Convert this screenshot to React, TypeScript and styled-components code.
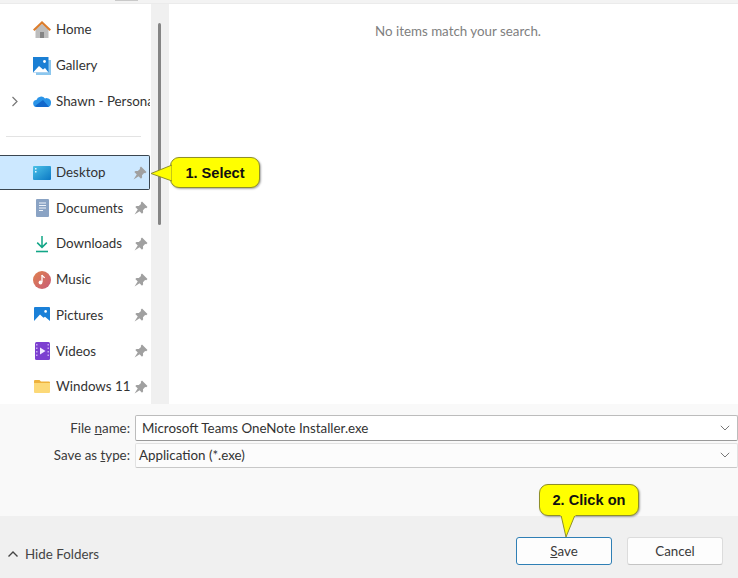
import React from "react";
import styled, { createGlobalStyle } from "styled-components";

const Global = createGlobalStyle`
  html, body { margin: 0; padding: 0; background: #fff; }
  #root { width: 738px; height: 578px; overflow: hidden; }
  * { box-sizing: border-box; }
`;

const Dialog = styled.div`
  position: relative;
  width: 738px;
  height: 578px;
  display: flex;
  flex-direction: column;
  overflow: hidden;
  background: #fff;
  font-family: Lato, Roboto, sans-serif;
  font-size: 13.35px;
  color: #333;
`;

const TopStrip = styled.div`
  height: 4px;
  flex: none;
  background: #f3f3f3;
  border-bottom: 1px solid #ebebeb;
  padding-left: 115px;
`;

const TopTick = styled.div`
  width: 23px;
  height: 1px;
  background: #c9c9c9;
`;

const Main = styled.div`
  height: 400px;
  flex: none;
  display: flex;
`;

const Sidebar = styled.nav`
  width: 151px;
  flex: none;
  padding-top: 8px;
  overflow: hidden;
`;

const Row = styled.div<{ $selected?: boolean }>`
  width: 150px;
  height: 35.7px;
  display: flex;
  align-items: center;
  position: relative;
  padding-left: 33px;
  white-space: nowrap;
  background: ${(p) => (p.$selected ? "#cce8ff" : "transparent")};
  ${(p) =>
    p.$selected
      ? "border: 1px solid #3a4650; border-left: none; border-radius: 0 2px 2px 0;"
      : ""}
`;

const Chevron = styled.svg`
  position: absolute;
  left: 11px;
  top: 13px;
  width: 8px;
  height: 11px;
`;

const IconBox = styled.span`
  width: 18px;
  height: 18px;
  flex: none;
  display: flex;
  align-items: center;
  justify-content: center;
  margin-right: 5px;
`;

const Label = styled.span`
  flex: 1;
  min-width: 0;
  overflow: hidden;
  padding-bottom: 1px;
`;

const Pin = styled.svg`
  flex: none;
  width: 14px;
  height: 14px;
  margin-right: 2px;
`;

const DividerRow = styled.div`
  height: 35.7px;
  display: flex;
  align-items: center;
  padding: 0 10px 0 6px;
`;

const Divider = styled.div`
  width: 100%;
  height: 1px;
  background: #e3e3e3;
`;

const Track = styled.div`
  width: 18px;
  flex: none;
  background: #f0f0f0;
  padding: 19px 0 0 7px;
`;

const Thumb = styled.div`
  width: 3px;
  height: 202px;
  border-radius: 2px;
  background: #858585;
`;

const Content = styled.main`
  flex: 1;
  display: flex;
  justify-content: center;
  padding: 19px 0 0 9px;
  color: #808080;
`;

const FormPanel = styled.section`
  height: 112px;
  flex: none;
  background: #f9f9f9;
  padding-top: 11px;
  display: flex;
  flex-direction: column;
  gap: 2px;
`;

const FormRow = styled.div`
  display: flex;
  align-items: center;
`;

const FormLabel = styled.label`
  width: 130px;
  flex: none;
  text-align: right;
  margin-right: 5px;
  padding-bottom: 1px;
  color: #3a3a3a;
`;

const Field = styled.div<{ $focus?: boolean }>`
  flex: 1;
  height: ${(p) => (p.$focus ? "26px" : "25px")};
  display: flex;
  align-items: center;
  justify-content: space-between;
  padding: 0 7px 1px ${(p) => (p.$focus ? "6px" : "3px")};
  background: ${(p) => (p.$focus ? "#fff" : "#fcfcfc")};
  border: 1px solid ${(p) => (p.$focus ? "#bcbcbc" : "#e2e2e2")};
  border-bottom-color: ${(p) => (p.$focus ? "#9a9a9a" : "#c8c8c8")};
  border-radius: 2px;
  color: #333;
`;

const Caret = styled.svg`
  width: 10px;
  height: 6px;
  flex: none;
`;

const Footer = styled.footer`
  flex: 1;
  background: #f0f0f0;
  display: flex;
  align-items: center;
  justify-content: space-between;
  padding: 8px 15px 0 7px;
`;

const HideFolders = styled.div`
  display: flex;
  align-items: center;
  gap: 6px;
  margin-top: 5px;
  color: #444;
`;

const Buttons = styled.div`
  display: flex;
  gap: 15px;
`;

const Button = styled.button<{ $primary?: boolean }>`
  width: 96px;
  height: 28px;
  padding: 0 0 1px;
  font: inherit;
  color: #3a3a3a;
  background: #fdfdfd;
  border-radius: 3px;
  border: 1px solid ${(p) => (p.$primary ? "#2f7fb5" : "#dcdcdc")};
  ${(p) => (p.$primary ? "" : "border-bottom-color: #c4c4c4;")}
`;

const Callout = styled.div<{ $left: number; $top: number; $width: number; $height: number }>`
  position: absolute;
  left: ${(p) => p.$left}px;
  top: ${(p) => p.$top}px;
  width: ${(p) => p.$width}px;
  height: ${(p) => p.$height}px;
  display: flex;
  align-items: center;
  justify-content: center;
  background: #ffff00;
  border: 1px solid #8f8f2a;
  border-radius: 9px;
  box-shadow: 1px 1px 2px rgba(0, 0, 0, 0.35);
  font-family: "Liberation Sans", Arial, sans-serif;
  font-weight: 700;
  font-size: 14.6px;
  color: #111;
`;

const Tail = styled.svg`
  position: absolute;
  overflow: visible;
`;

const LeftTail = styled(Tail)`
  left: -20px;
  top: 5px;
  width: 22px;
  height: 20px;
`;

const DownTail = styled(Tail)`
  left: 18px;
  top: 30px;
  width: 20px;
  height: 22px;
`;

const Home = () => (
  <svg width="18" height="18" viewBox="0 0 18 18">
    <path d="M2.500 8.500 9 3l6.500 5.500V17h-13z" fill="#bdbdbd" />
    <path d="M7 11h4v6H7z" fill="#858585" />
    <path d="M.7 9.300 9 1.500l8.300 7.800" fill="none" stroke="#dc7d2c" strokeWidth="2.200" />
  </svg>
);

const Gallery = () => (
  <svg width="18" height="18" viewBox="0 0 18 18">
    <path d="M3 3h15v15H3z" fill="#8cc7ee" />
    <path d="M0 0h15.500v15.500H0z" fill="#1a7fd4" />
    <path d="M0 15.500 6 9l4 3.500 2-1.500 3.500 4.500z" fill="#fff" />
    <circle cx="11.500" cy="4.500" r="1.400" fill="#fff" />
  </svg>
);

const Cloud = () => (
  <svg width="18" height="12" viewBox="0 0 18 12">
    <path d="M4 12a3.500 3.500 0 0 1-.6-7A5 5 0 0 1 12 3.400 4.400 4.400 0 0 1 18 8a4 4 0 0 1-3.800 4z" fill="#2a94e8" />
    <path d="M2 11 10 5l6 7H4z" fill="#1268cc" />
  </svg>
);

const DesktopIcon = () => (
  <svg width="18" height="14" viewBox="0 0 18 14">
    <defs>
      <linearGradient id="dg" x1="0" y1="0" x2="1" y2="1">
        <stop offset="0" stopColor="#4cc2e8" />
        <stop offset="1" stopColor="#0b78c4" />
      </linearGradient>
    </defs>
    <rect width="18" height="14" rx="1" fill="url(#dg)" />
    <path d="M2 2h1.500v1.500H2zM2 5h1.500v1.500H2z" fill="#e8f7ff" />
  </svg>
);

const Docs = () => (
  <svg width="13" height="18" viewBox="0 0 13 18">
    <rect width="13" height="18" rx="1" fill="#8aa3c4" />
    <path d="M3 4h7M3 6.500h7M3 9h7M3 11.500h4" stroke="#f0f4fa" strokeWidth="1" />
  </svg>
);

const Down = () => (
  <svg width="14" height="18" viewBox="0 0 14 18">
    <path d="M7 1v11M2.200 7.600 7 12.400l4.800-4.800" fill="none" stroke="#12a687" strokeWidth="1.500" />
    <path d="M1 16.500h12" stroke="#12a687" strokeWidth="1.600" />
  </svg>
);

const Music = () => (
  <svg width="18" height="18" viewBox="0 0 18 18">
    <defs>
      <linearGradient id="mg" x1="0" y1="0" x2="1" y2="1">
        <stop offset="0" stopColor="#e0814e" />
        <stop offset="1" stopColor="#c85c78" />
      </linearGradient>
    </defs>
    <circle cx="9" cy="9" r="9" fill="url(#mg)" />
    <path d="M9 4v7" stroke="#fff" strokeWidth="1.300" />
    <path d="M9 4c.4 1.600 2 1.800 2.600 3" fill="none" stroke="#fff" strokeWidth="1.200" />
    <circle cx="7.500" cy="11.500" r="1.900" fill="#fff" />
  </svg>
);

const Pictures = () => (
  <svg width="16" height="16" viewBox="0 0 16 16">
    <rect width="16" height="16" rx="1" fill="#1a80d8" />
    <path d="M0 16V14L6 7.500l3.500 3.200 1.500-1L16 14v2z" fill="#fff" />
    <circle cx="11.600" cy="4.400" r="1.300" fill="#fff" />
  </svg>
);

const Videos = () => (
  <svg width="15" height="18" viewBox="0 0 15 18">
    <rect width="15" height="18" rx="1.500" fill="#7c3fd0" />
    <path d="M5 5.500v7l5.500-3.500z" fill="#f2eaff" />
    <path d="M1.200 2h1.200v1.500H1.200zM1.200 5.500h1.200V7H1.200zM1.200 9h1.200v1.500H1.200zM1.200 12.500h1.200V14H1.200zM12.600 2h1.200v1.500h-1.200zM12.600 5.500h1.200V7h-1.200zM12.600 9h1.200v1.500h-1.200zM12.600 12.500h1.200V14h-1.200z" fill="#d9c6f7" />
  </svg>
);

const Folder = () => (
  <svg width="16" height="13" viewBox="0 0 16 13">
    <path d="M0 1a1 1 0 0 1 1-1h4.500L7 1.600h8a1 1 0 0 1 1 1V4H0z" fill="#eeb23c" />
    <path d="M0 3h16v9a1 1 0 0 1-1 1H1a1 1 0 0 1-1-1z" fill="#fcd978" />
  </svg>
);

const PinIcon = () => (
  <Pin viewBox="0 0 14 14">
    <path d="M8 .5 13.500 6l-1.300 1.200-1.100-.2L9 9.200l.1 2.300L8 12.700 1.300 6l1.200-1.100 2.300.1L7 2.900l-.2-1.100z" fill="#a0a0a0" />
    <path d="M4 8 .6 13.400 6 10z" fill="#a0a0a0" />
  </Pin>
);

type Item = { label: string; icon: React.ReactNode; pinned?: boolean; expand?: boolean; selected?: boolean };

const topItems: Item[] = [
  { label: "Home", icon: <Home /> },
  { label: "Gallery", icon: <Gallery /> },
  { label: "Shawn - Personal", icon: <Cloud />, expand: true },
];

const pinnedItems: Item[] = [
  { label: "Desktop", icon: <DesktopIcon />, pinned: true, selected: true },
  { label: "Documents", icon: <Docs />, pinned: true },
  { label: "Downloads", icon: <Down />, pinned: true },
  { label: "Music", icon: <Music />, pinned: true },
  { label: "Pictures", icon: <Pictures />, pinned: true },
  { label: "Videos", icon: <Videos />, pinned: true },
  { label: "Windows 11", icon: <Folder />, pinned: true },
];

const NavRow = ({ item }: { item: Item }) => (
  <Row $selected={item.selected}>
    {item.expand && (
      <Chevron viewBox="0 0 8 11">
        <path d="M1.500 1 6 5.500 1.500 10" fill="none" stroke="#777" strokeWidth="1.200" />
      </Chevron>
    )}
    <IconBox>{item.icon}</IconBox>
    <Label>{item.label}</Label>
    {item.pinned && <PinIcon />}
  </Row>
);

const CaretIcon = () => (
  <Caret viewBox="0 0 10 6">
    <path d="M.8.8 5 5l4.200-4.200" fill="none" stroke="#777" strokeWidth="1" />
  </Caret>
);

export default function App() {
  return (
    <Dialog>
      <Global />
      <TopStrip>
        <TopTick />
      </TopStrip>
      <Main>
        <Sidebar>
          {topItems.map((it) => (
            <NavRow key={it.label} item={it} />
          ))}
          <DividerRow>
            <Divider />
          </DividerRow>
          {pinnedItems.map((it) => (
            <NavRow key={it.label} item={it} />
          ))}
        </Sidebar>
        <Track>
          <Thumb />
        </Track>
        <Content>No items match your search.</Content>
      </Main>
      <FormPanel>
        <FormRow>
          <FormLabel>
            File <u>n</u>ame:
          </FormLabel>
          <Field $focus>
            <span>Microsoft Teams OneNote Installer.exe</span>
            <CaretIcon />
          </Field>
        </FormRow>
        <FormRow>
          <FormLabel>
            Save as <u>t</u>ype:
          </FormLabel>
          <Field>
            <span>Application (*.exe)</span>
            <CaretIcon />
          </Field>
        </FormRow>
      </FormPanel>
      <Footer>
        <HideFolders>
          <svg width="12" height="8" viewBox="0 0 12 8">
            <path d="M1.500 6.500 6 2l4.500 4.500" fill="none" stroke="#444" strokeWidth="1.400" />
          </svg>
          <span>Hide Folders</span>
        </HideFolders>
        <Buttons>
          <Button $primary>
            <u>S</u>ave
          </Button>
          <Button>Cancel</Button>
        </Buttons>
      </Footer>
      <Callout $left={170} $top={157} $width={90} $height={31}>
        <LeftTail viewBox="0 0 22 20">
          <path d="M21 2 0 10.500 21 18z" fill="#ffff00" stroke="#8f8f2a" strokeWidth="1" />
          <path d="M21 .5h2v19h-2z" fill="#ffff00" />
        </LeftTail>
        1. Select
      </Callout>
      <Callout $left={539} $top={484} $width={100} $height={32}>
        <DownTail viewBox="0 0 20 22">
          <path d="M3 0 8 22 17 0z" fill="#ffff00" stroke="#8f8f2a" strokeWidth="1" />
          <path d="M2.500-1.500h15V1h-15z" fill="#ffff00" />
        </DownTail>
        2. Click on
      </Callout>
    </Dialog>
  );
}
